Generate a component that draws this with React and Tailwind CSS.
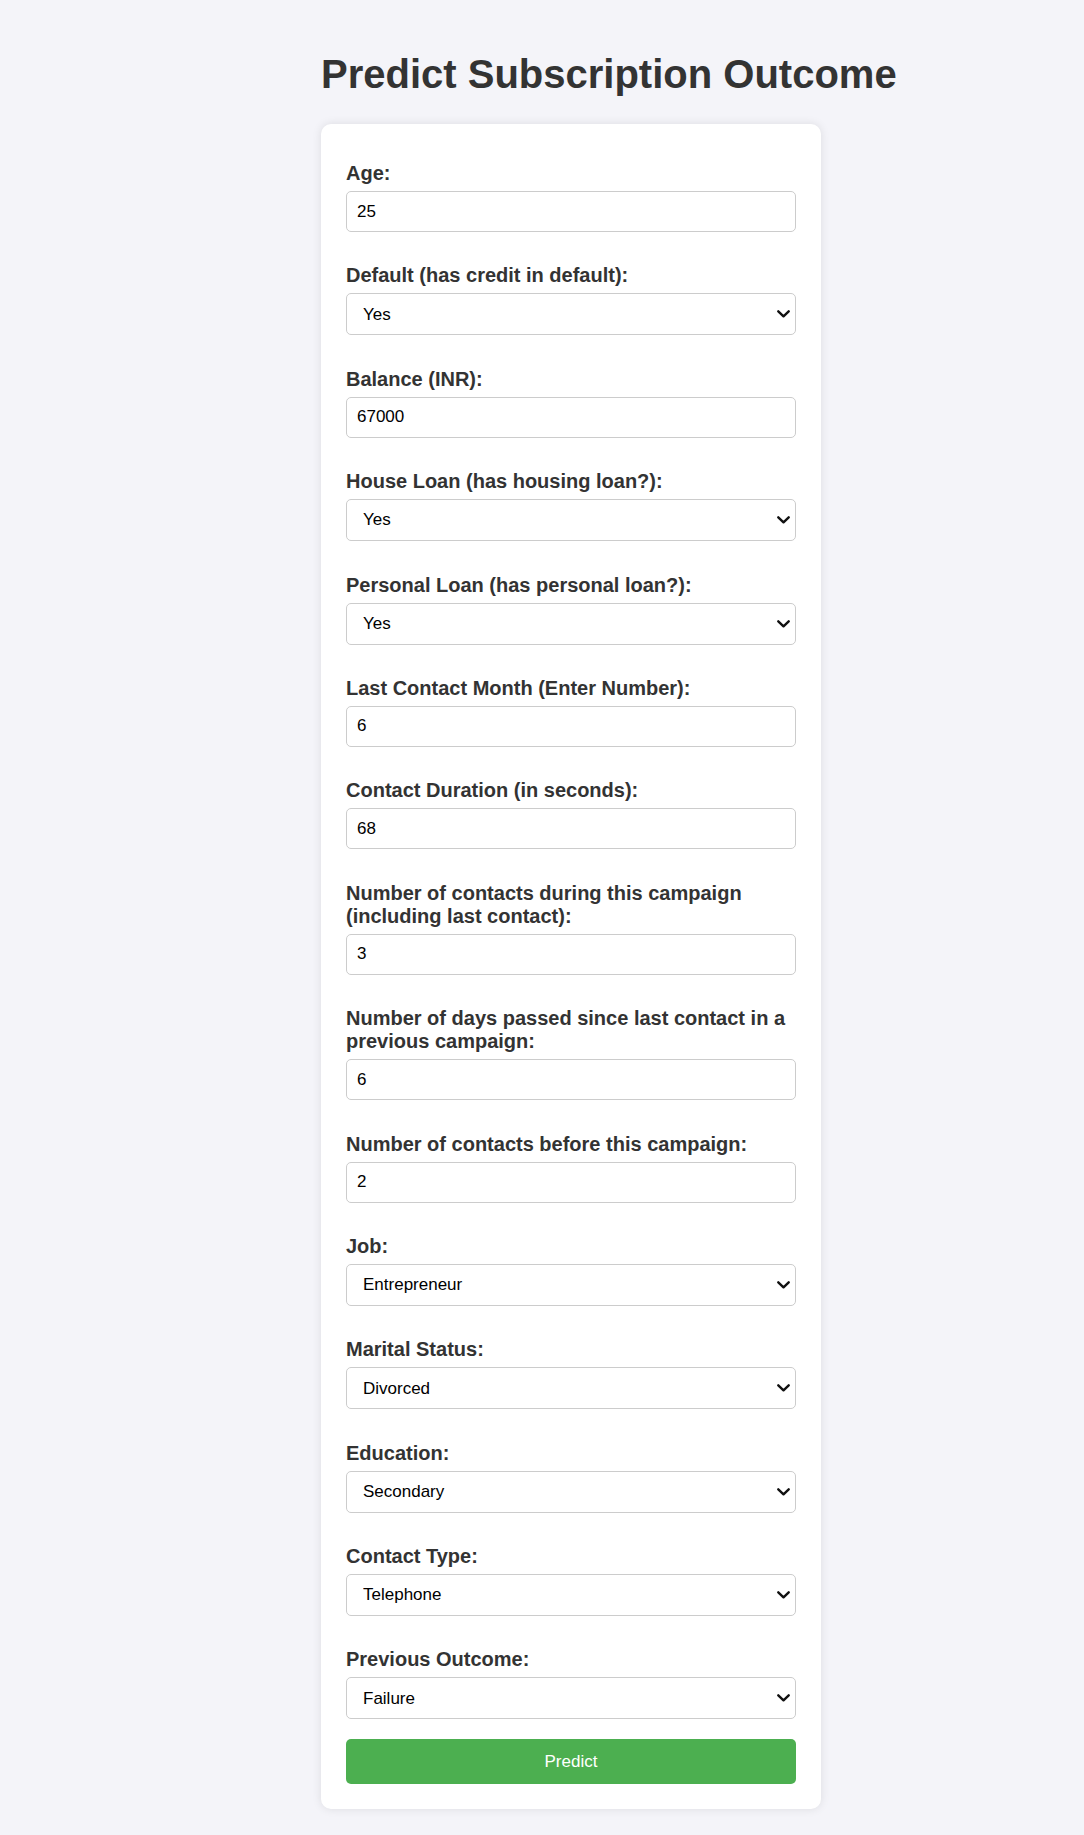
import React from 'react';

const inputCls =
  'block w-full h-[41px] px-[10px] border border-[#ccc] rounded-[5px] bg-white text-[17px] text-black outline-none';
const selectCls =
  'block w-full h-[42px] pl-[16px] pr-[30px] border border-[#ccc] rounded-[5px] bg-white text-[17px] text-black appearance-none outline-none';

const fields = [
  { label: 'Age:', type: 'input', value: '25' },
  { label: 'Default (has credit in default):', type: 'select', value: 'Yes', options: ['Yes', 'No'] },
  { label: 'Balance (INR):', type: 'input', value: '67000' },
  { label: 'House Loan (has housing loan?):', type: 'select', value: 'Yes', options: ['Yes', 'No'] },
  { label: 'Personal Loan (has personal loan?):', type: 'select', value: 'Yes', options: ['Yes', 'No'] },
  { label: 'Last Contact Month (Enter Number):', type: 'input', value: '6' },
  { label: 'Contact Duration (in seconds):', type: 'input', value: '68' },
  { label: 'Number of contacts during this campaign (including last contact):', type: 'input', value: '3' },
  { label: 'Number of days passed since last contact in a previous campaign:', type: 'input', value: '6' },
  { label: 'Number of contacts before this campaign:', type: 'input', value: '2' },
  { label: 'Job:', type: 'select', value: 'Entrepreneur', options: ['Admin', 'Blue-collar', 'Entrepreneur', 'Housemaid', 'Management', 'Retired', 'Self-employed', 'Services', 'Student', 'Technician', 'Unemployed'] },
  { label: 'Marital Status:', type: 'select', value: 'Divorced', options: ['Divorced', 'Married', 'Single'] },
  { label: 'Education:', type: 'select', value: 'Secondary', options: ['Primary', 'Secondary', 'Tertiary'] },
  { label: 'Contact Type:', type: 'select', value: 'Telephone', options: ['Cellular', 'Telephone'] },
  { label: 'Previous Outcome:', type: 'select', value: 'Failure', options: ['Failure', 'Other', 'Success'] },
];

const Chevron = () => (
  <svg
    className="pointer-events-none absolute right-[6px] top-1/2 -translate-y-1/2"
    width="13"
    height="8"
    viewBox="0 0 13 8"
    fill="none"
  >
    <path d="M1.3 1.3 L6.5 6.3 L11.7 1.3" stroke="#111" strokeWidth="2.4" strokeLinecap="round" strokeLinejoin="round" />
  </svg>
);

const Field = ({ field, last }) => (
  <div className={last ? 'mb-[20px]' : 'mb-[32.4px]'}>
    <label className="block mb-[6px] text-[20px] leading-[23px] font-bold text-[#333]">
      {field.label}
    </label>
    {field.type === 'input' ? (
      <input type="number" defaultValue={field.value} className={inputCls} />
    ) : (
      <div className="relative">
        <select defaultValue={field.value} className={selectCls}>
          {field.options.map((o) => (
            <option key={o} value={o}>{o}</option>
          ))}
        </select>
        <Chevron />
      </div>
    )}
  </div>
);

export default function App() {
  return (
    <div className="min-h-[1835px] bg-[#f4f4f9] font-['Liberation_Sans',Arial,sans-serif] text-[#333]">
      <div className="ml-[321px] pt-[51px] pb-[26px]">
        <h1 className="text-[40px] leading-[46px] font-bold text-[#333] mb-[27px]">
          Predict Subscription Outcome
        </h1>
        <form className="w-[500px] bg-white rounded-[10px] shadow-[0_0_10px_rgba(0,0,0,0.1)] px-[25px] pt-[38px] pb-[25px]">
          {fields.map((f, i) => (
            <Field key={f.label} field={f} last={i === fields.length - 1} />
          ))}
          <button
            type="button"
            className="block w-full h-[45px] rounded-[5px] bg-[#4caf50] text-white text-[17px]"
          >
            Predict
          </button>
        </form>
      </div>
    </div>
  );
}
